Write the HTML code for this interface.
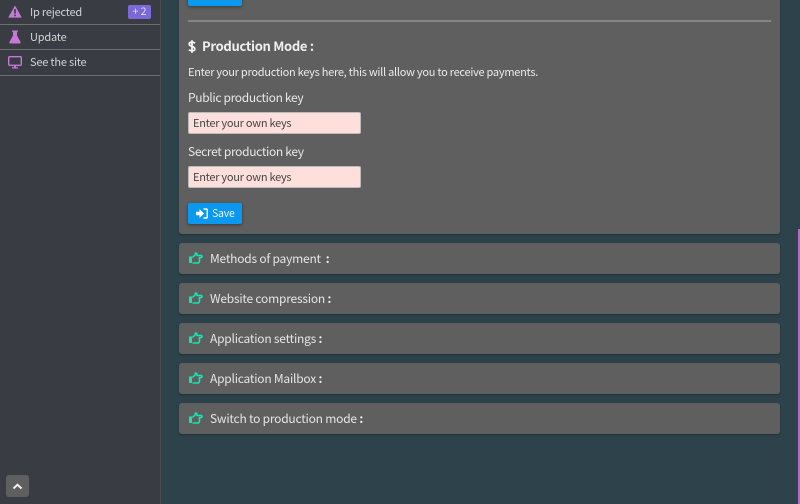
<!DOCTYPE html>
<html><head><meta charset="utf-8">
<style>
html,body{margin:0;padding:0;width:800px;height:504px;overflow:hidden;background:#2e424b;font-family:"Noto Sans CJK JP","Liberation Sans",sans-serif;color:#e8e8e8}
.abs{position:absolute;white-space:nowrap;line-height:16px}
#side{position:absolute;left:0;top:0;width:160px;height:504px;background:#393c42;border-right:1px solid #4a4d52}
.line{position:absolute;left:0;width:160px;height:1px;background:#6c6e71}
.st{font-size:11px;color:#d4d4d6;left:30px;letter-spacing:-.2px}
.panel{position:absolute;left:179px;width:601px;background:#5f5f5f;border-radius:3px;box-shadow:0 1px 2px rgba(0,0,0,.3)}
.bar{height:31px}
.bar span{position:absolute;left:31px;top:8px;font-size:12px;line-height:16px;color:#e6e6e6;white-space:nowrap;letter-spacing:-.22px}
.bar b{color:#f2f2f2}
.bar svg{position:absolute;left:10px;top:9px}
.inp{position:absolute;left:188px;width:173px;height:22px;background:#ffdfdb;border-radius:2px;border:1px solid #bbb;box-sizing:border-box;color:#444;font-size:11px;line-height:20px;padding-left:4px;letter-spacing:-.26px}
.lab{font-size:12px;color:#e8e8e8;left:188px;letter-spacing:-.33px}
.btn{position:absolute;left:188px;background:#0b98ef;border-radius:2px;box-shadow:0 1px 3px rgba(0,0,0,.4)}
</style></head><body>
<div id="side">
<svg class="abs" style="left:8px;top:5px" width="14" height="13" viewBox="0 0 14 13"><path d="M7 .5 13.800 12.600H.2Z" fill="#c678d6"/><rect x="6.200" y="4" width="1.600" height="4.600" fill="#393c42"/><rect x="6.200" y="9.600" width="1.600" height="1.600" fill="#393c42"/></svg>
<div class="abs st" style="top:4px">Ip rejected</div>
<div class="abs" style="left:128px;top:5px;width:23px;height:14px;background:#7d68d8;border-radius:2px;color:#e6e2f7;font-size:10.500px;line-height:14px;text-align:center">+ 2</div>
<div class="line" style="top:24px"></div>
<svg class="abs" style="left:9px;top:30px" width="12" height="14" viewBox="0 0 12 14"><path d="M3 .5H9V1.800H8V5.500L11.600 12Q12 13.500 10.500 13.500H1.500Q0 13.500.4 12L4 5.500V1.800H3Z" fill="#c678d6"/></svg>
<div class="abs st" style="top:29px">Update</div>
<div class="line" style="top:49px"></div>
<svg class="abs" style="left:8px;top:56px" width="14" height="13" viewBox="0 0 14 13"><rect x=".7" y=".7" width="12.600" height="8.600" rx="1" fill="none" stroke="#c678d6" stroke-width="1.400"/><path d="M6 10H8V11.200H10V12.500H4V11.200H6Z" fill="#c678d6"/></svg>
<div class="abs st" style="top:54px">See the site</div>
<div class="line" style="top:75px"></div>
<div class="abs" style="left:6px;top:475px;width:23px;height:22px;background:#5f5f5f;border-radius:3px"></div>
<svg class="abs" style="left:12px;top:483px" width="11" height="7" viewBox="0 0 11 7"><path d="M1.500 5.500 5.500 1.700 9.500 5.500" fill="none" stroke="#f2f2f2" stroke-width="2"/></svg>
</div>

<div class="panel" style="top:-20px;height:254px"></div>
<div class="btn" style="top:-10px;width:54px;height:16px"></div>
<div class="abs" style="left:188px;top:20px;width:583px;height:2px;background:#858585"></div>
<svg class="abs" style="left:188px;top:40px" width="8" height="13" viewBox="0 0 8 13"><path d="M7 3.200Q6 2.200 4 2.200 1.200 2.200 1.200 4 1.200 5.400 4 6.400 6.800 7.400 6.800 9 6.800 10.800 4 10.800 2 10.800 1 9.700M4 .3V12.700" fill="none" stroke="#f5f5f5" stroke-width="1.800"/></svg>
<div class="abs" style="left:202px;top:38px;font-size:13px;font-weight:bold;color:#efefef;letter-spacing:-.3px">Production Mode :</div>
<div class="abs" style="left:188px;top:64px;font-size:11px;color:#ececec;letter-spacing:-.26px">Enter your production keys here, this will allow you to receive payments.</div>
<div class="abs lab" style="top:90px">Public production key</div>
<div class="inp" style="top:112px">Enter your own keys</div>
<div class="abs lab" style="top:144px">Secret production key</div>
<div class="inp" style="top:166px">Enter your own keys</div>
<div class="btn" style="top:203px;width:54px;height:21px">
<svg class="abs" style="left:8px;top:5px" width="12" height="11" viewBox="0 0 12 11"><path d="M0 3.800H3.500V1L8 5.500 3.500 10V7.200H0Z" fill="#fff"/><path d="M7.500 1H10Q11.300 1 11.300 2.300V8.700Q11.300 10 10 10H7.500" fill="none" stroke="#fff" stroke-width="1.500"/></svg>
<div class="abs" style="left:24px;top:3px;font-size:10.500px;color:#eef7fd;letter-spacing:-.2px">Save</div>
</div>

<div class="panel bar" style="top:243px"><svg width="14" height="13" viewBox="0 0 14 13"><rect x="0" y="4.500" width="3" height="6.500" fill="#19e3ae"/><path d="M3.500 5.500 6 3 6.500 1Q8 1 8 3V3.500H12.500Q13.500 4.500 12.500 5.500H10.500V9.500Q10 11 8.500 11H3.500" fill="none" stroke="#19e3ae" stroke-width="1.600"/></svg><span>Methods of payment &nbsp;<b>:</b></span></div>
<div class="panel bar" style="top:283px"><svg width="14" height="13" viewBox="0 0 14 13"><rect x="0" y="4.500" width="3" height="6.500" fill="#19e3ae"/><path d="M3.500 5.500 6 3 6.500 1Q8 1 8 3V3.500H12.500Q13.500 4.500 12.500 5.500H10.500V9.500Q10 11 8.500 11H3.500" fill="none" stroke="#19e3ae" stroke-width="1.600"/></svg><span>Website compression <b>:</b></span></div>
<div class="panel bar" style="top:323px"><svg width="14" height="13" viewBox="0 0 14 13"><rect x="0" y="4.500" width="3" height="6.500" fill="#19e3ae"/><path d="M3.500 5.500 6 3 6.500 1Q8 1 8 3V3.500H12.500Q13.500 4.500 12.500 5.500H10.500V9.500Q10 11 8.500 11H3.500" fill="none" stroke="#19e3ae" stroke-width="1.600"/></svg><span>Application settings <b>:</b></span></div>
<div class="panel bar" style="top:363px"><svg width="14" height="13" viewBox="0 0 14 13"><rect x="0" y="4.500" width="3" height="6.500" fill="#19e3ae"/><path d="M3.500 5.500 6 3 6.500 1Q8 1 8 3V3.500H12.500Q13.500 4.500 12.500 5.500H10.500V9.500Q10 11 8.500 11H3.500" fill="none" stroke="#19e3ae" stroke-width="1.600"/></svg><span>Application Mailbox <b>:</b></span></div>
<div class="panel bar" style="top:403px"><svg width="14" height="13" viewBox="0 0 14 13"><rect x="0" y="4.500" width="3" height="6.500" fill="#19e3ae"/><path d="M3.500 5.500 6 3 6.500 1Q8 1 8 3V3.500H12.500Q13.500 4.500 12.500 5.500H10.500V9.500Q10 11 8.500 11H3.500" fill="none" stroke="#19e3ae" stroke-width="1.600"/></svg><span>Switch to production mode <b>:</b></span></div>

<div class="abs" style="left:798px;top:229px;width:2px;height:275px;background:#b06cc4"></div>
</body></html>
